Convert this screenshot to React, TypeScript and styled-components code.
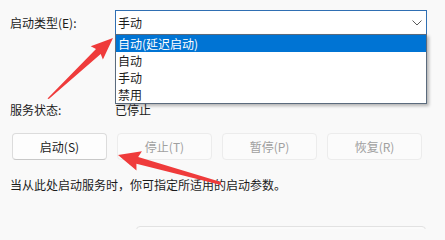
import React from "react";
import styled, { createGlobalStyle } from "styled-components";

const Global = createGlobalStyle`
  html, body { margin: 0; padding: 0; }
  body {
    width: 445px; height: 229px; overflow: hidden;
    background: #f9f9f9;
    font-family: "Noto Sans CJK SC", "Noto Sans", sans-serif;
    font-size: 12px; color: #1b1b1b;
  }
`;

const Page = styled.div`
  position: relative;
  width: 445px;
  height: 229px;
  overflow: hidden;
  display: flex;
  flex-direction: column;
  padding-top: 10px;
  box-sizing: border-box;
`;

const Row = styled.div<{ $mt?: number; $h: number }>`
  display: flex;
  align-items: center;
  height: ${(p) => p.$h}px;
  margin-top: ${(p) => p.$mt ?? 0}px;
  padding-left: 10px;
  line-height: 17px;
  white-space: nowrap;
`;

const Label = styled.div`
  width: 105px;
  flex: none;
`;

const SelectWrap = styled.div`
  position: relative;
  width: 312px;
  height: 24px;
`;

const SelectBox = styled.div`
  box-sizing: border-box;
  height: 24px;
  background: #ffffff;
  border: 1px solid #2f6fb3;
  border-bottom: none;
  display: flex;
  align-items: center;
  justify-content: space-between;
  padding: 0 4px 0 2px;
`;

const List = styled.div`
  position: absolute;
  top: 24px;
  left: 0;
  width: 312px;
  box-sizing: border-box;
  background: #ffffff;
  border: 1px solid #5b6b7d;
  box-shadow: 2px 2px 3px rgba(0, 0, 0, 0.28);
  z-index: 2;
`;

const Item = styled.div<{ $sel?: boolean }>`
  height: 17px;
  line-height: 17px;
  padding-left: 2px;
  background: ${(p) => (p.$sel ? "#0074d4" : "transparent")};
  color: ${(p) => (p.$sel ? "#ffffff" : "#1b1b1b")};
`;

const Separator = styled.div`
  height: 1px;
  width: 420px;
  background: #a6a6a6;
  margin-top: 52px;
`;

const Value = styled.div`
  color: #1b1b1b;
`;

const ButtonRow = styled.div`
  display: flex;
  gap: 10px;
  margin-top: 15px;
  padding-left: 12px;
`;

const Button = styled.div<{ $disabled?: boolean }>`
  box-sizing: border-box;
  width: 95px;
  height: 27px;
  display: flex;
  align-items: center;
  justify-content: center;
  border-radius: 4px;
  background: ${(p) => (p.$disabled ? "#fbfbfb" : "#fdfdfd")};
  border: 1px solid ${(p) => (p.$disabled ? "#ececec" : "#dcdcdc")};
  border-bottom-color: ${(p) => (p.$disabled ? "#ececec" : "#c8c8c8")};
  color: ${(p) => (p.$disabled ? "#a0a0a0" : "#1b1b1b")};
`;

const Input = styled.div`
  margin-top: 33px;
  margin-left: 136px;
  width: 290px;
  height: 24px;
  box-sizing: border-box;
  border: 1px solid #e2e2e2;
  border-radius: 4px;
  background: #fbfbfb;
  flex: none;
`;

const Overlay = styled.svg`
  position: absolute;
  left: 0;
  top: 0;
  pointer-events: none;
  z-index: 5;
`;

const Chevron = () => (
  <svg width="10" height="6" viewBox="0 0 10 6">
    <path d="M0.5 0.5 L5 5 L9.5 0.5" fill="none" stroke="#5a5a5a" strokeWidth="1" />
  </svg>
);

export default function App() {
  return (
    <>
      <Global />
      <Page>
        <Row $h={24}>
          <Label>启动类型(E):</Label>
          <SelectWrap>
            <SelectBox>
              <span>手动</span>
              <Chevron />
            </SelectBox>
            <List>
              <Item $sel>自动(延迟启动)</Item>
              <Item>自动</Item>
              <Item>手动</Item>
              <Item>禁用</Item>
            </List>
          </SelectWrap>
        </Row>
        <Separator />
        <Row $h={17} $mt={15}>
          <Label>服务状态:</Label>
          <Value>已停止</Value>
        </Row>
        <ButtonRow>
          <Button>启动(S)</Button>
          <Button $disabled>停止(T)</Button>
          <Button $disabled>暂停(P)</Button>
          <Button $disabled>恢复(R)</Button>
        </ButtonRow>
        <Row $h={17} $mt={16}>
          当从此处启动服务时，你可指定所适用的启动参数。
        </Row>
        <Input />
        <Overlay width="445" height="229" viewBox="0 0 445 229">
          <polygon
            fill="#ef3b3b"
            points="47.5,98.5 96,48.9 90.7,46.3 113,38 102.9,59.5 100.7,54.1 48.8,99"
          />
          <polygon
            fill="#ef3b3b"
            points="221,182 138.2,157 141.9,151.3 118,155 136.5,170.5 136.4,163.8 221,185"
          />
        </Overlay>
      </Page>
    </>
  );
}
